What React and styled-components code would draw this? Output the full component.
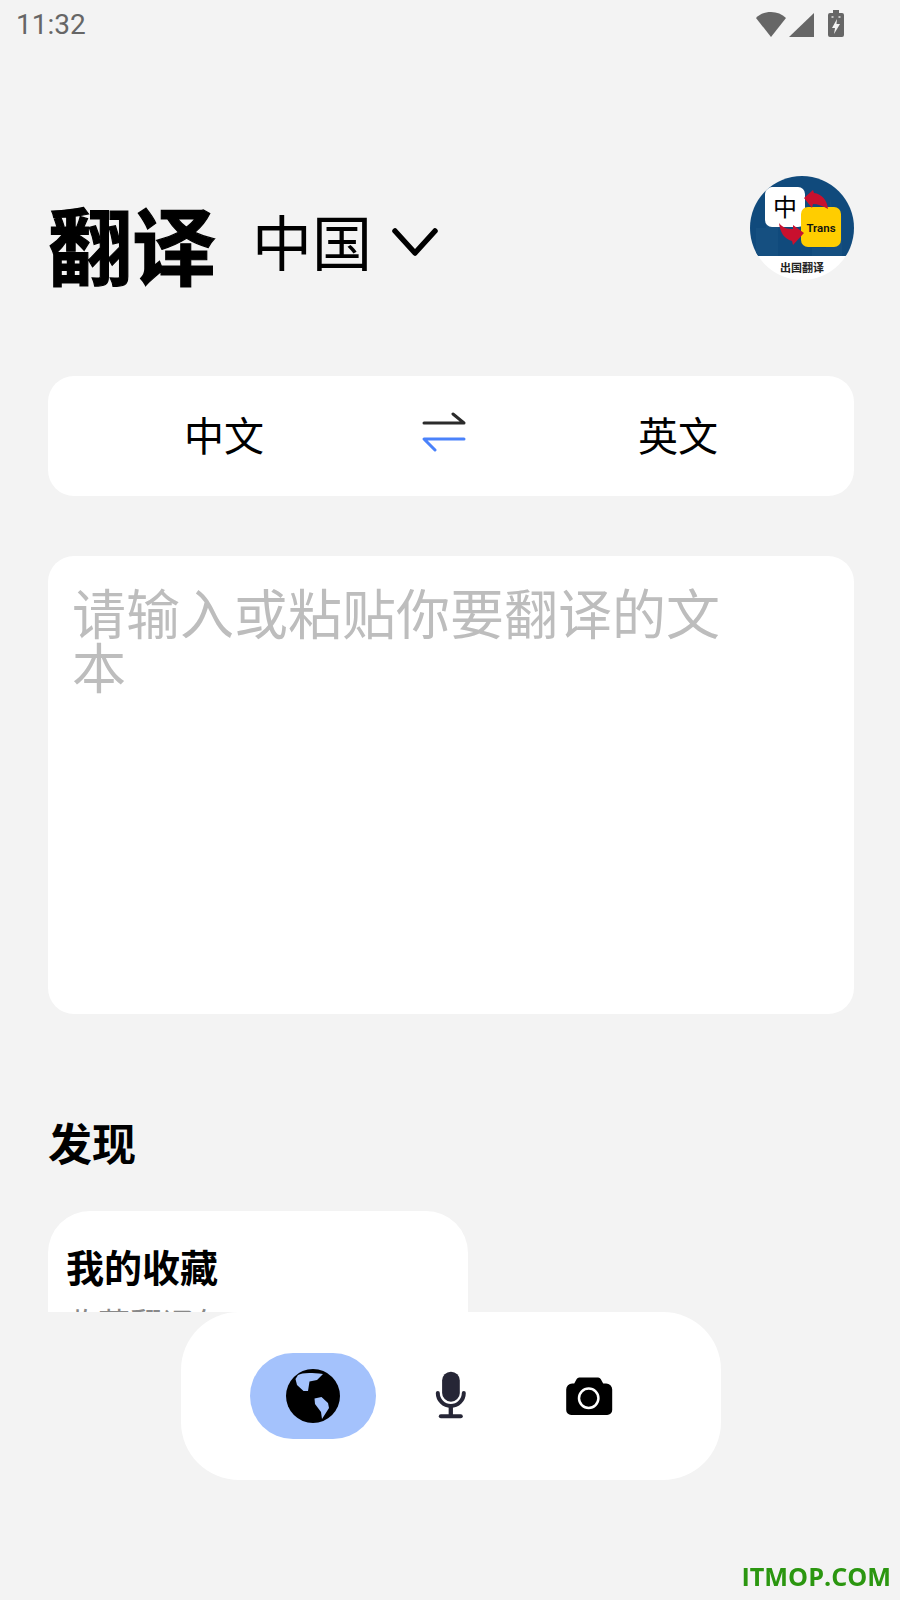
import React from "react";
import styled, { createGlobalStyle } from "styled-components";

const CJK = `"Noto Sans CJK SC", "Noto Sans", sans-serif`;

const Global = createGlobalStyle`
  html, body { margin: 0; padding: 0; background: #f3f3f3; }
  body { font-family: ${CJK}; width: 900px; height: 1600px; overflow: hidden; }
`;

const Page = styled.div`
  width: 900px;
  height: 1600px;
  display: flex;
  flex-direction: column;
  background: #f3f3f3;
`;

const Scroll = styled.main`
  height: 1312px;
  overflow: hidden;
  flex: none;
`;

const StatusBar = styled.div`
  height: 50px;
  display: flex;
  align-items: center;
  justify-content: space-between;
  padding: 0 56px 0 16px;
`;

const Time = styled.span`
  font: 400 28px/52px Roboto, sans-serif;
  color: #666;
`;

const StatusIcons = styled.div`
  display: flex;
  align-items: center;
  margin-top: -3px;
`;

const Header = styled.header`
  height: 104px;
  margin-top: 126px;
  padding: 0 46px 0 48px;
  display: flex;
  align-items: center;
`;

const Title = styled.h1`
  margin: 29px 0 0;
  font: 700 84px/104px ${CJK};
  -webkit-text-stroke: 1.2px #000;
  color: #000;
`;

const Region = styled.div`
  margin: 24px 0 0 36px;
  font: 400 60px/104px ${CJK};
  color: #000;
`;

const Chevron = styled.svg`
  margin: 29px 0 0 20px;
`;

const Avatar = styled.svg`
  margin-left: auto;
`;

const LangCard = styled.section`
  margin: 96px 46px 0 48px;
  height: 120px;
  background: #fff;
  border-radius: 26px;
  display: grid;
  grid-template-columns: 1fr auto 1fr;
  align-items: center;
  padding: 0 136px;
`;

const Lang = styled.span`
  margin-top: -4px;
  font: 400 40px/120px ${CJK};
  color: #000;
  justify-self: ${(p) => p.$side};
`;

const SwapIcon = styled.svg`
  margin: -8px 0 0 -14px;
`;

const InputCard = styled.section`
  margin: 60px 46px 0 48px;
  height: 458px;
  box-sizing: border-box;
  background: #fff;
  border-radius: 26px;
  padding: 29px 120px 0 24px;
  font: 400 54px/54px ${CJK};
  color: #bdbdbd;
`;

const SectionTitle = styled.h2`
  margin: 101px 0 0 48px;
  font: 700 44px/54px ${CJK};
  color: #000;
`;

const FeatureCard = styled.article`
  margin: 42px 0 0 48px;
  width: 420px;
  height: 200px;
  box-sizing: border-box;
  background: #fff;
  border-radius: 42px;
  padding: 30px 18px;
`;

const FeatureTitle = styled.div`
  font: 700 38px/50px ${CJK};
  color: #000;
`;

const FeatureSub = styled.div`
  margin-top: 11px;
  font: 400 32px/40px ${CJK};
  color: #888;
`;

const BottomBar = styled.nav`
  align-self: center;
  margin-left: 2px;
  width: 540px;
  height: 168px;
  flex: none;
  background: #fff;
  border-radius: 58px;
  display: grid;
  grid-template-columns: repeat(3, 138px);
  justify-items: center;
  align-items: center;
  padding-left: 63px;
  box-sizing: border-box;
`;

const Tab = styled.div`
  width: 126px;
  height: 86px;
  border-radius: 43px;
  background: ${(p) => (p.$active ? "#a4c2fc" : "transparent")};
  display: flex;
  align-items: center;
  justify-content: center;
`;

const Watermark = styled.div`
  position: fixed;
  right: 9px;
  bottom: 9px;
  font: 700 25.2px/30px "Open Sans", sans-serif;
  color: #2b9610;
`;

function Logo() {
  return (
    <Avatar width="104" height="104" viewBox="0 0 104 104">
      <defs>
        <clipPath id="logoClip"><circle cx="52" cy="52" r="52" /></clipPath>
      </defs>
      <g clipPath="url(#logoClip)">
        <rect width="104" height="80" fill="#104a7c" />
        <path d="M6 80V52h10V42h12v38zM62 80V72h14V40h4V22l4 18h8v40z" fill="#154f80" />
        <rect y="80" width="104" height="24" fill="#fff" />
        <rect x="15" y="11" width="40" height="40" rx="7" fill="#fff" />
        <rect x="51" y="31" width="40" height="40" rx="7" fill="#ffcd00" />
        <path d="M54 22L63 14L64 17C72 18 77 24 78 33C73 30 68 28 63 28L62 32Z" fill="#c8102e" />
        <path d="M54 57L43 49L43 53C37 53 33 52 29 47C30 56 34 63 42 65L43 69Z" fill="#c8102e" />
        <text x="35" y="40" textAnchor="middle" fontSize="24" fontFamily={CJK} fill="#000">中</text>
        <text x="71" y="56" textAnchor="middle" fontSize="11.500" fontWeight="600" fontFamily="Roboto, sans-serif" fill="#111">Trans</text>
        <text x="52" y="96" textAnchor="middle" fontSize="11" fontWeight="700" fontFamily={CJK} fill="#222">出国翻译</text>
      </g>
    </Avatar>
  );
}

export default function App() {
  return (
    <Page>
      <Global />
      <Scroll>
        <StatusBar>
          <Time>11:32</Time>
          <StatusIcons>
            <svg width="30" height="26" viewBox="0 0 30 26"><path d="M0 7C4 3 9 1 15 1s11 2 15 6L15 26z" fill="#666" /></svg>
            <svg width="26" height="26" viewBox="0 0 26 26" style={{ marginLeft: 3 }}><path d="M25 2v24H0z" fill="#666" /></svg>
            <svg width="16" height="27" viewBox="0 0 16 27" style={{ marginLeft: 13 }}>
              <path d="M5 0h6v3h3a2 2 0 0 1 2 2v20a2 2 0 0 1-2 2H2a2 2 0 0 1-2-2V5a2 2 0 0 1 2-2h3z" fill="#666" />
              <path d="M9 9l-5 9h3l-1 6 6-10H8.500z" fill="#f3f3f3" />
              <path d="M3.500 6h2v2h-2zM10.500 6h2v2h-2z" fill="#c4c4c4" />
            </svg>
          </StatusIcons>
        </StatusBar>
        <Header>
          <Title>翻译</Title>
          <Region>中国</Region>
          <Chevron width="46" height="30" viewBox="0 0 46 30">
            <path d="M3 3l20 22L43 3" fill="none" stroke="#000" strokeWidth="5.500" strokeLinecap="round" strokeLinejoin="round" />
          </Chevron>
          <Logo />
        </Header>
        <LangCard>
          <Lang $side="start">中文</Lang>
          <SwapIcon width="44" height="40" viewBox="0 0 44 40">
            <path d="M2 11h40L31 2" fill="none" stroke="#2b2b2b" strokeWidth="3" strokeLinecap="round" strokeLinejoin="round" />
            <path d="M42 27H2l11 11" fill="none" stroke="#4a82fb" strokeWidth="3" strokeLinecap="round" strokeLinejoin="round" />
          </SwapIcon>
          <Lang $side="end">英文</Lang>
        </LangCard>
        <InputCard>请输入或粘贴你要翻译的文本</InputCard>
        <SectionTitle>发现</SectionTitle>
        <FeatureCard>
          <FeatureTitle>我的收藏</FeatureTitle>
          <FeatureSub>收藏翻译句</FeatureSub>
        </FeatureCard>
      </Scroll>
      <BottomBar>
        <Tab $active>
          <svg width="66" height="66" viewBox="0 -2 66 66">
            <circle cx="33" cy="31" r="27" fill="#000" />
            <path d="M15.500 14L18 10C22 8 28 7 43 9L37 15L29.500 16.500L28 26L23.500 26L17 20Z" fill="#a4c2fc" />
            <path d="M34.500 33.500L41.500 32L48 38L49 43L42 54L41 47L35 39Z" fill="#a4c2fc" />
          </svg>
        </Tab>
        <Tab>
          <svg width="56" height="66" viewBox="-1.800 -2 56 66">
            <rect x="17.300" y="6.700" width="17.700" height="30" rx="8.800" fill="#262636" />
            <path d="M13 28a13 13 0 0 0 26 0" fill="none" stroke="#262636" strokeWidth="4" strokeLinecap="round" />
            <path d="M26 42v8" stroke="#262636" strokeWidth="4.300" />
            <path d="M16 51.300h20" stroke="#262636" strokeWidth="4" strokeLinecap="round" />
          </svg>
        </Tab>
        <Tab>
          <svg width="66" height="66" viewBox="0.800 -2 66 66">
            <path d="M24 12.500H43a3 3 0 0 1 2.500 1.500L48 18.500H51a6 6 0 0 1 6 6V45a5 5 0 0 1-5 5H16a5 5 0 0 1-5-5V24.500a6 6 0 0 1 6-6H19L21.500 14a3 3 0 0 1 2.500-1.500Z" fill="#000" />
            <circle cx="33.500" cy="33.300" r="9.700" fill="none" stroke="#fff" strokeWidth="2.500" />
          </svg>
        </Tab>
      </BottomBar>
      <Watermark>ITMOP.COM</Watermark>
    </Page>
  );
}
